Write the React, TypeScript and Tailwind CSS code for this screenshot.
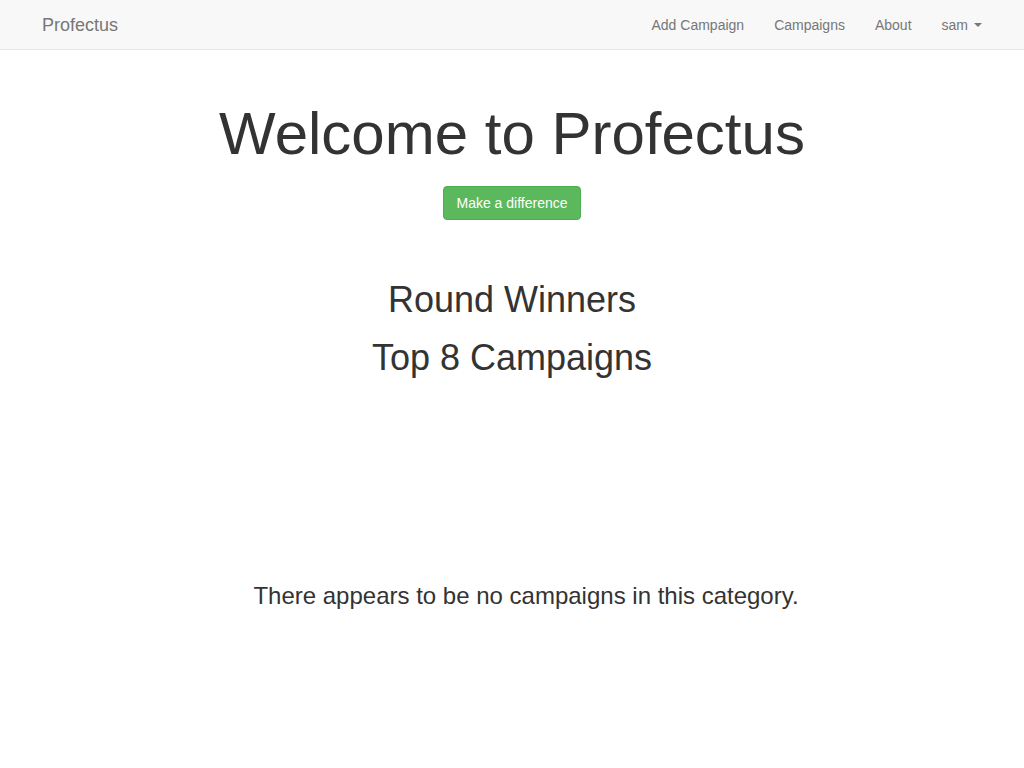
export default function App() {
  return (
    <div className="min-h-screen bg-white text-[#333] [font-family:'Liberation_Sans',Arial,Helvetica,sans-serif] text-[14px] leading-[20px]">
      <nav className="h-[50px] bg-[#f8f8f8] border-b border-[#e7e7e7]">
        <div className="w-[970px] mx-auto px-[15px] flex items-center justify-between h-[49px]">
          <a href="#" className="text-[18px] leading-[20px] text-[#777] py-[15px]">
            Profectus
          </a>
          <ul className="flex -mr-[15px]">
            <li>
              <a href="#" className="block px-[15px] py-[15px] text-[#777]">
                Add Campaign
              </a>
            </li>
            <li>
              <a href="#" className="block px-[15px] py-[15px] text-[#777]">
                Campaigns
              </a>
            </li>
            <li>
              <a href="#" className="block px-[15px] py-[15px] text-[#777]">
                About
              </a>
            </li>
            <li>
              <a href="#" className="flex items-center px-[15px] py-[15px] text-[#777]">
                sam
                <span className="ml-[6px] inline-block w-0 h-0 border-t-[4px] border-t-[#777] border-x-[4px] border-x-transparent" />
              </a>
            </li>
          </ul>
        </div>
      </nav>

      <main className="w-[970px] mx-auto px-[15px] text-center">
        <h1 className="mt-[51px] text-[60px] leading-[66px] font-normal">
          Welcome to Profectus
        </h1>
        <div className="mt-[19px] flex justify-center">
          <a
            href="#"
            className="inline-block h-[34px] px-[12px] py-[6px] text-[14px] leading-[20px] text-white bg-[#5cb85c] border border-[#4cae4c] rounded-[4px]"
          >
            Make a difference
          </a>
        </div>
        <h2 className="mt-[60px] text-[36px] leading-[40px] font-normal">
          Round Winners
        </h2>
        <h2 className="mt-[18px] text-[36px] leading-[40px] font-normal">
          Top 8 Campaigns
        </h2>
        <h3 className="mt-[205px] pl-[28px] text-[24px] leading-[26px] font-normal">
          There appears to be no campaigns in this category.
        </h3>
      </main>
    </div>
  );
}
